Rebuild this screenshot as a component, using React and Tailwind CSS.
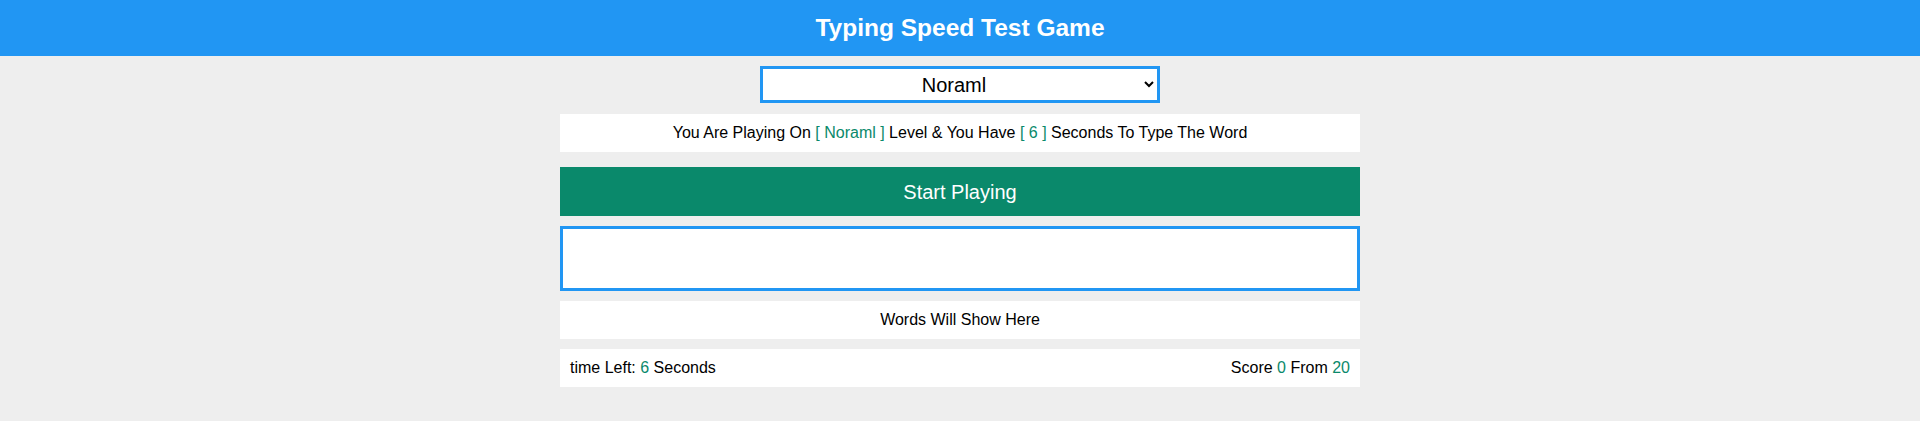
import React from "react";

export default function App() {
  return (
    <div className="min-h-[421px] bg-[#eeeeee] font-['Liberation_Sans',Arial,sans-serif] text-black">
      <div className="h-[56px] bg-[#2196f3] flex items-center justify-center">
        <h1 className="text-white font-bold text-[24.5px] leading-none">Typing Speed Test Game</h1>
      </div>
      <div className="w-[800px] mx-auto flex flex-col">
        <div className="flex justify-center mt-[10px]">
          <select
            defaultValue="Noraml"
            className="w-[400px] h-[37px] border-[3px] border-[#2196f3] bg-white text-[20px] text-center text-black outline-none font-['Liberation_Sans',Arial,sans-serif]"
          >
            <option>Easy</option>
            <option>Noraml</option>
            <option>Hard</option>
          </select>
        </div>
        <div className="mt-[11px] h-[38px] bg-white flex items-center justify-center text-[16px]">
          <span>
            You Are Playing On <span className="text-[#0a896b]">[ Noraml ]</span> Level &amp; You Have{" "}
            <span className="text-[#0a896b]">[ 6 ]</span> Seconds To Type The Word
          </span>
        </div>
        <div className="mt-[15px] h-[49px] bg-[#0a896b] flex items-center justify-center text-white text-[20px]">
          Start Playing
        </div>
        <input
          type="text"
          className="mt-[10px] h-[65px] border-[3px] border-[#2196f3] bg-white outline-none"
        />
        <div className="mt-[10px] h-[38px] bg-white flex items-center justify-center text-[16px]">
          Words Will Show Here
        </div>
        <div className="mt-[10px] h-[38px] bg-white flex items-center justify-between px-[10px] text-[16px]">
          <span>
            time Left: <span className="text-[#0a896b]">6</span> Seconds
          </span>
          <span>
            Score <span className="text-[#0a896b]">0</span> From <span className="text-[#0a896b]">20</span>
          </span>
        </div>
      </div>
    </div>
  );
}
